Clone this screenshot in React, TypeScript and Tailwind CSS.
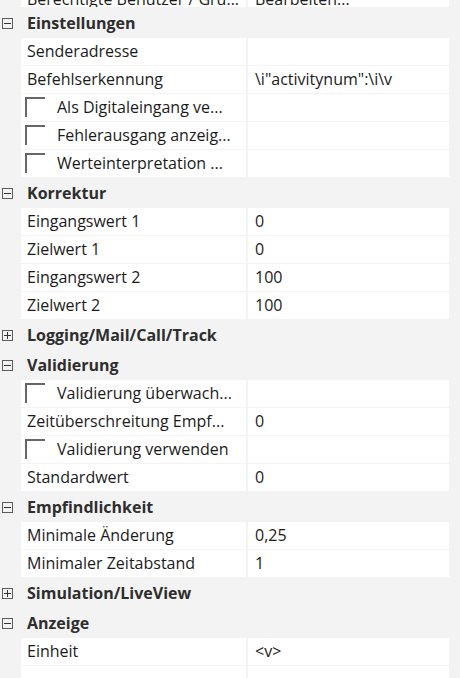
import React from 'react';

type Row =
  | { kind: 'cat'; label: string; open: boolean }
  | { kind: 'prop'; label: string; value?: string }
  | { kind: 'check'; label: string };

const rows: Row[] = [
  { kind: 'cat', label: 'Einstellungen', open: true },
  { kind: 'prop', label: 'Senderadresse' },
  { kind: 'prop', label: 'Befehlserkennung', value: '\\i"activitynum":\\i\\v' },
  { kind: 'check', label: 'Als Digitaleingang ve...' },
  { kind: 'check', label: 'Fehlerausgang anzeig...' },
  { kind: 'check', label: 'Werteinterpretation ...' },
  { kind: 'cat', label: 'Korrektur', open: true },
  { kind: 'prop', label: 'Eingangswert 1', value: '0' },
  { kind: 'prop', label: 'Zielwert 1', value: '0' },
  { kind: 'prop', label: 'Eingangswert 2', value: '100' },
  { kind: 'prop', label: 'Zielwert 2', value: '100' },
  { kind: 'cat', label: 'Logging/Mail/Call/Track', open: false },
  { kind: 'cat', label: 'Validierung', open: true },
  { kind: 'check', label: 'Validierung überwach...' },
  { kind: 'prop', label: 'Zeitüberschreitung Empf...', value: '0' },
  { kind: 'check', label: 'Validierung verwenden' },
  { kind: 'prop', label: 'Standardwert', value: '0' },
  { kind: 'cat', label: 'Empfindlichkeit', open: true },
  { kind: 'prop', label: 'Minimale Änderung', value: '0,25' },
  { kind: 'prop', label: 'Minimaler Zeitabstand', value: '1' },
  { kind: 'cat', label: 'Simulation/LiveView', open: false },
  { kind: 'cat', label: 'Anzeige', open: true },
  { kind: 'prop', label: 'Einheit', value: '<v>' },
  { kind: 'prop', label: '' },
];

const Toggle = ({ open }: { open: boolean }) => (
  <div className="relative w-[11px] h-[11px] border border-[#5c5c5c] ml-[2px]">
    <div className="absolute left-[1px] right-[1px] top-[4px] h-[1px] bg-[#333]" />
    {!open && <div className="absolute top-[1px] bottom-[1px] left-[4px] w-[1px] bg-[#333]" />}
  </div>
);

const PropRow = ({ name, value, first }: { name: React.ReactNode; value?: string; first?: boolean }) => (
  <div className={first ? 'flex h-[22px] -mt-[14px] border-b border-[#f3f3f3]' : 'flex h-[28px] border-b border-[#f3f3f3]'}>
    <div className="w-[21px] shrink-0" />
    <div className="w-[225px] shrink-0 bg-white overflow-hidden whitespace-nowrap">{name}</div>
    <div className="w-[2px] shrink-0" />
    <div className="w-[201px] shrink-0 bg-white pl-[7px] leading-[26px] whitespace-nowrap overflow-hidden">{value}</div>
  </div>
);

export default function App() {
  return (
    <div
      className="h-[678px] w-[460px] overflow-hidden bg-[#f3f3f3] text-[16px] text-[#1b1b1b]"
      style={{ fontFamily: '"Open Sans", "Noto Sans", sans-serif' }}
    >
      {/* top row scrolled mostly out of view */}
      <PropRow
        first
        name={<span className="pl-[6px] leading-[26px]">Berechtigte Benutzer / Gru...</span>}
        value="Bearbeiten..."
      />
      {rows.map((r, i) => {
        if (r.kind === 'cat') {
          return (
            <div key={i} className="flex items-center h-[30px]">
              <div className="w-[21px] shrink-0 flex items-center">
                <Toggle open={r.open} />
              </div>
              <span className="pl-[6px] font-bold text-[#2e2e2e]">{r.label}</span>
            </div>
          );
        }
        if (r.kind === 'check') {
          return (
            <PropRow
              key={i}
              name={
                <div className="flex items-start h-full">
                  <div className="mt-[3px] ml-[4px] w-[20px] h-[20px] shrink-0 border-t-2 border-l-2 border-[#666]" />
                  <span className="ml-[12px] leading-[26px]">{r.label}</span>
                </div>
              }
            />
          );
        }
        return (
          <PropRow
            key={i}
            name={<span className="pl-[6px] leading-[26px]">{r.label}</span>}
            value={r.value}
          />
        );
      })}
    </div>
  );
}
